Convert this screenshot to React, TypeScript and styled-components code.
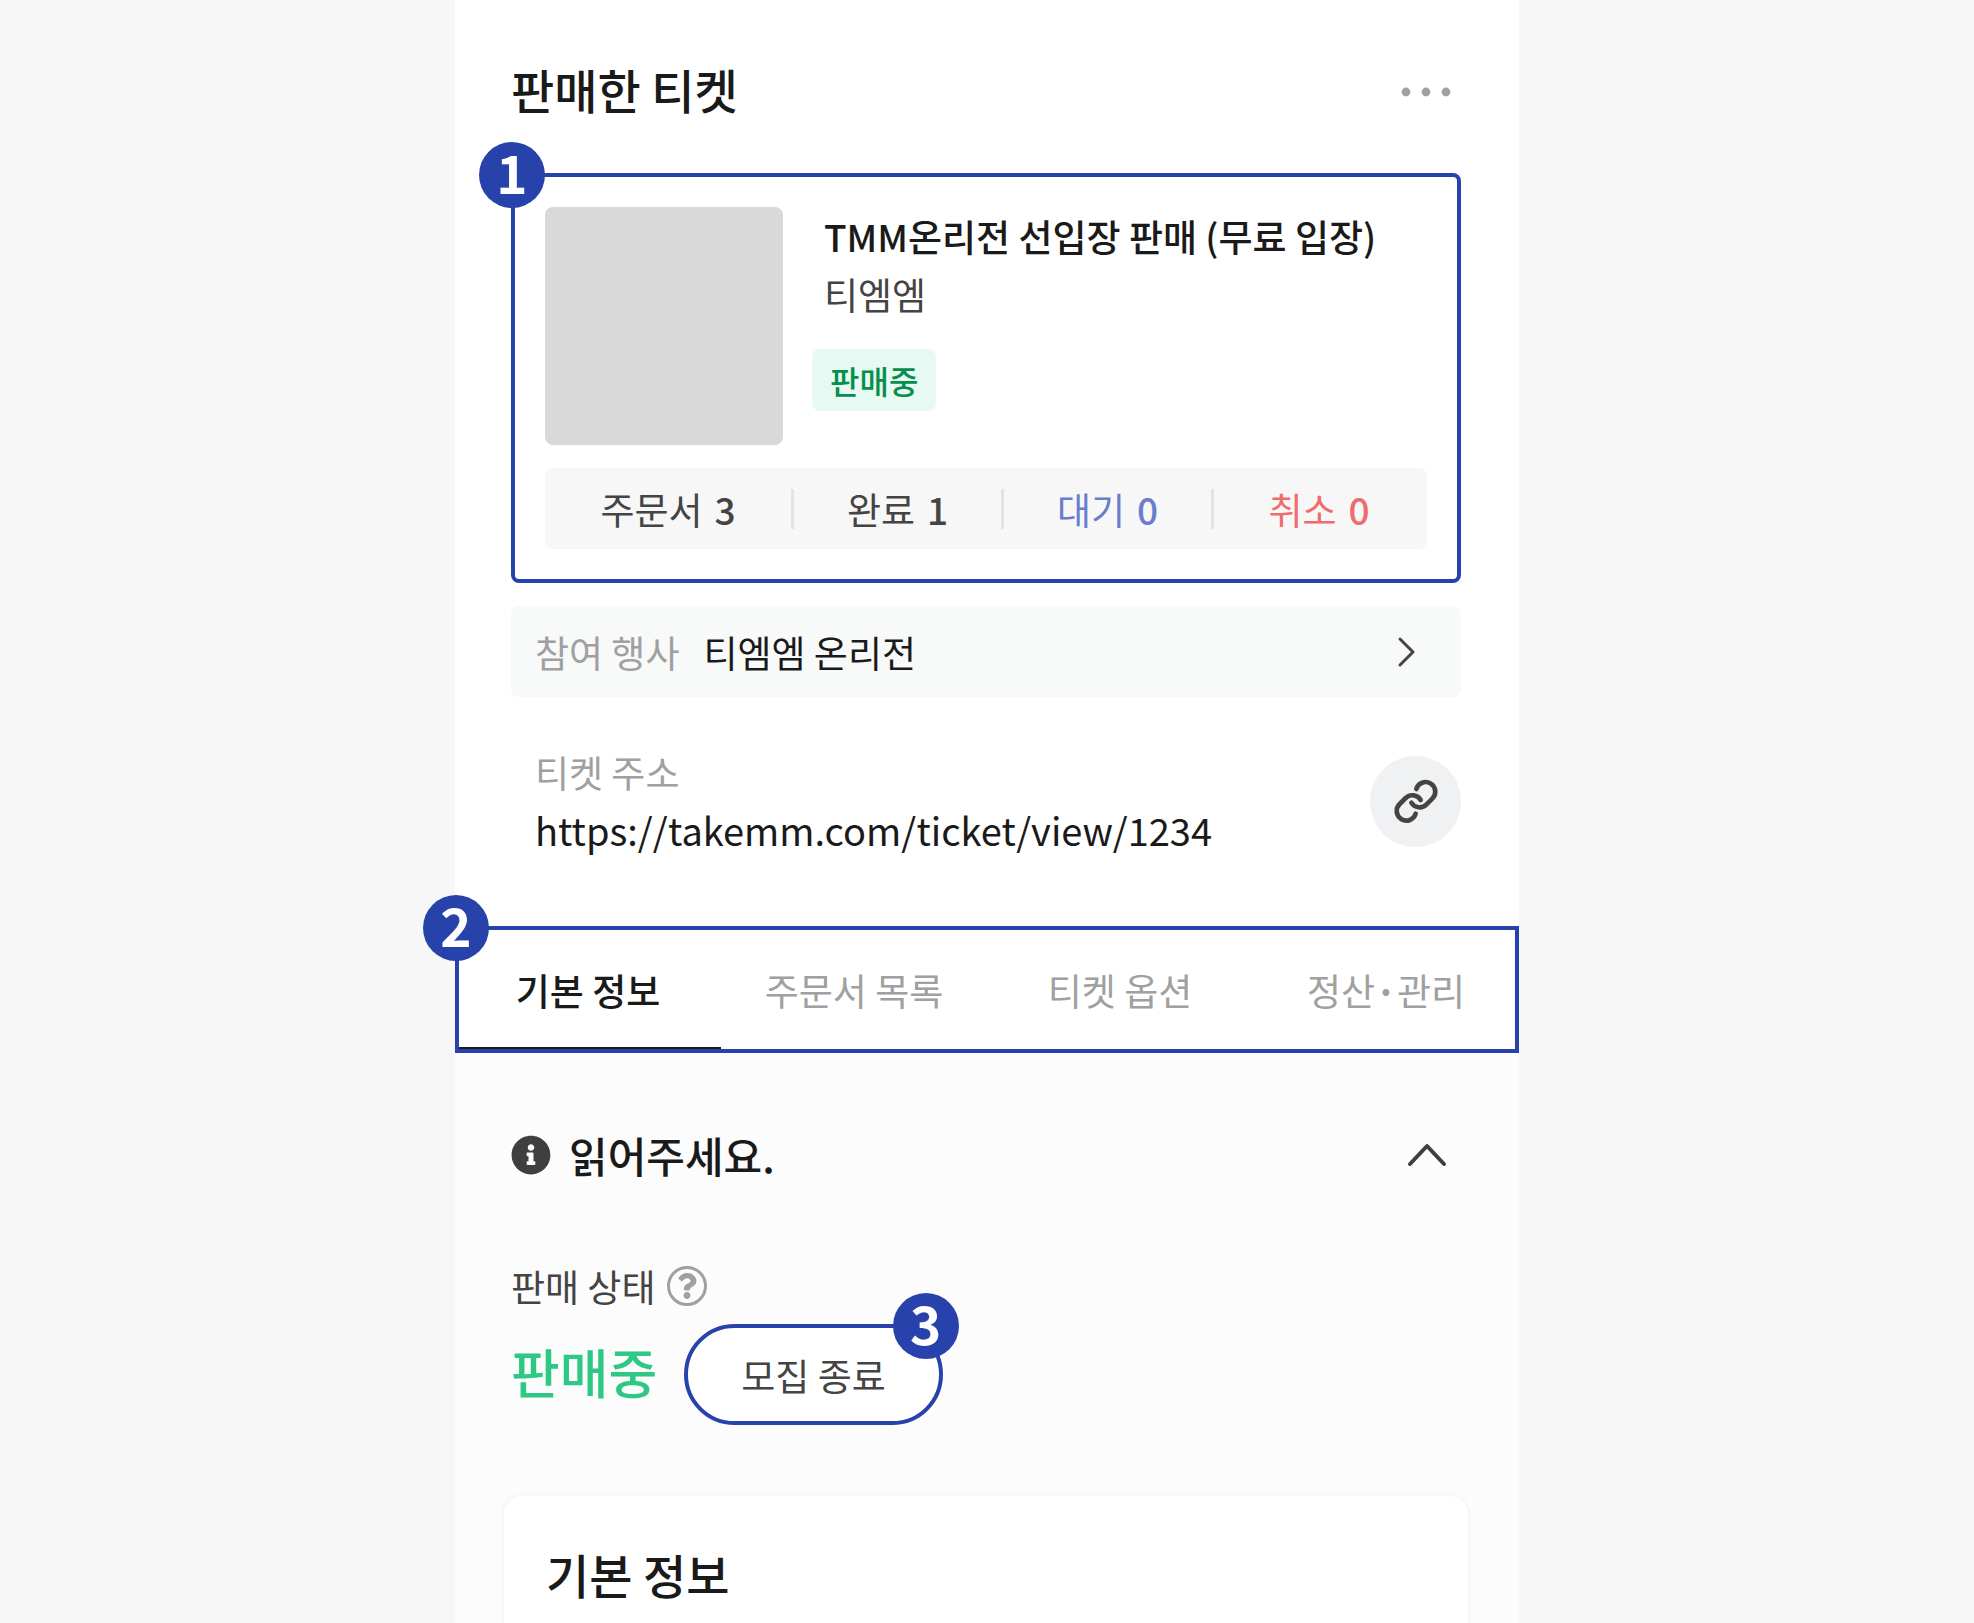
import React from 'react';
import styled, { createGlobalStyle } from 'styled-components';
import { FaInfoCircle, FaQuestion } from 'react-icons/fa';

const blue = '#2842ab';
const ink = '#1a1a1a';
const body = '#444444';
const muted = '#a0a0a0';

const GlobalStyle = createGlobalStyle`
  *, *::before, *::after { box-sizing: border-box; }
  body { margin: 0; background: #f7f7f7; }
  h1, h2, p, dl, dt, dd { margin: 0; font-size: inherit; font-weight: inherit; }
  body, button {
    font-family: "Noto Sans CJK KR", "Noto Sans", sans-serif;
    font-size: 37px;
    line-height: 58px;
    color: ${ink};
  }
  button { margin: 0; padding: 0; border: 0; background: none; cursor: pointer; }
  a { color: inherit; text-decoration: none; }
  svg { display: block; }
`;

const Panel = styled.main`
  display: flex;
  flex-direction: column;
  width: 100%;
  max-width: 1064px;
  min-height: 100vh;
  margin: 0 auto;
  background: #fff;
`;

const Top = styled.div`
  padding: 56px 58px 67px 56px;
`;

const Header = styled.header`
  display: flex;
  align-items: center;
  justify-content: space-between;
  margin-bottom: 45px;
`;

const Heading = styled.h1`
  padding-bottom: 6px;
  font-size: 47px;
  line-height: 66px;
  font-weight: 500;
`;

const MoreButton = styled.button`
  padding: 0 10px;
`;

const Badge = styled.span<{ $side?: 'left' | 'right' }>`
  position: absolute;
  top: -31px;
  ${(p) => (p.$side === 'right' ? 'right: -16px;' : 'left: -32px;')}
  z-index: 2;
  display: flex;
  align-items: center;
  justify-content: center;
  width: 66px;
  height: 66px;
  padding-bottom: 8px;
  border-radius: 50%;
  background: ${blue};
  color: #fff;
  font-size: 53px;
  line-height: 58px;
  font-weight: 700;
`;

const Marked = styled.div`
  position: relative;
`;

const Ticket = styled.section`
  padding: 30px;
  border: 4px solid ${blue};
  border-radius: 8px;
`;

const TicketTop = styled.div`
  display: flex;
  gap: 29px;
  margin-bottom: 23px;
`;

const Thumb = styled.div`
  flex: none;
  width: 238px;
  height: 238px;
  border-radius: 8px;
  background: #d9d9d9;
`;

const Info = styled.div`
  display: flex;
  flex-direction: column;
  align-items: flex-start;
`;

const TicketName = styled.h2`
  padding-left: 12px;
  font-weight: 500;
`;

const Seller = styled.p`
  padding-left: 12px;
  color: ${body};
`;

const Tag = styled.span`
  margin-top: 26px;
  padding: 0 18px;
  border-radius: 8px;
  background: #e6f9f3;
  color: #068f4b;
  font-size: 32px;
  line-height: 62px;
  font-weight: 500;
`;

const Stats = styled.dl`
  display: grid;
  grid-template-columns: 249fr 210fr 210fr 213fr;
  align-items: center;
  height: 81px;
  border-radius: 8px;
  background: #f7f7f7;
`;

const Stat = styled.div<{ $color?: string }>`
  display: flex;
  align-items: center;
  justify-content: center;
  gap: 12px;
  height: 40px;
  border-right: 3px solid #e3e3e3;
  color: ${(p) => p.$color ?? body};

  &:last-child { border-color: transparent; }
  dd { font-weight: 500; }
`;

const EventLink = styled.a`
  display: flex;
  align-items: center;
  gap: 24px;
  height: 91px;
  margin-top: 23px;
  padding: 0 44px 0 24px;
  border-radius: 8px;
  background: #f8f9f9;

  svg { margin-left: auto; }
`;

const Muted = styled.span`
  color: ${muted};
`;

const Address = styled.div`
  display: flex;
  align-items: center;
  justify-content: space-between;
  margin-top: 46px;
  padding-left: 24px;
`;

const Url = styled.p`
  font-size: 38px;
`;

const CopyButton = styled.button`
  display: flex;
  align-items: center;
  justify-content: center;
  width: 91px;
  height: 91px;
  border-radius: 50%;
  background: #f0f1f3;
`;

const Tabs = styled.nav`
  display: grid;
  grid-template-columns: repeat(4, 1fr);
  height: 127px;

  &::after {
    content: '';
    position: absolute;
    inset: 0;
    border: 4px solid ${blue};
    pointer-events: none;
  }
`;

const Tab = styled.button<{ $active?: boolean }>`
  border-bottom: 6px solid ${(p) => (p.$active ? ink : 'transparent')};
  border-top: 6px solid transparent;
  color: ${(p) => (p.$active ? ink : muted)};
  font-weight: ${(p) => (p.$active ? 500 : 400)};
`;

const Content = styled.div`
  display: flex;
  flex: 1;
  flex-direction: column;
  padding: 72px 48px 0 46px;
  background: #fcfcfc;
`;

const Notice = styled.button`
  display: flex;
  align-items: center;
  gap: 18px;
  margin: 0 10px 72px;
  font-size: 42px;
  line-height: 60px;
  font-weight: 500;

  svg:last-child { margin: 0 14px 0 auto; }
`;

const StatusLabel = styled.div`
  display: flex;
  align-items: center;
  gap: 12px;
  margin: 0 10px 9px;
  color: ${body};
`;

const Help = styled.button`
  display: flex;
  align-items: center;
  justify-content: center;
  width: 40px;
  height: 40px;
  border: 3px solid ${muted};
  border-radius: 50%;
  color: ${muted};
`;

const StatusRow = styled.div`
  display: flex;
  align-items: center;
  gap: 27px;
  margin: 0 10px 68px;
`;

const Status = styled.strong`
  padding-bottom: 8px;
  color: #2dc984;
  font-size: 53px;
  line-height: 66px;
  font-weight: 500;
`;

const EndButton = styled.button`
  display: block;
  height: 101px;
  padding: 0 53px;
  border: 4px solid ${blue};
  border-radius: 51px;
  background: #fff;
  color: ${body};
`;

const Card = styled.section`
  flex: 1;
  padding: 45px 42px 0;
  border: 3px solid #f7f8f8;
  border-bottom: 0;
  border-radius: 22px 22px 0 0;
  background: #fff;
`;

const tabs = [
  { id: 'info', label: '기본 정보' },
  { id: 'orders', label: '주문서 목록' },
  { id: 'options', label: '티켓 옵션' },
  { id: 'manage', label: <>정산<b>·</b>관리</> },
];

const stats = [
  { label: '주문서', value: 3 },
  { label: '완료', value: 1 },
  { label: '대기', value: 0, color: '#6a7dcb' },
  { label: '취소', value: 0, color: '#f06b6b' },
];

export default function App() {
  return (
    <>
      <GlobalStyle />
      <Panel>
        <Top>
          <Header>
            <Heading>판매한 티켓</Heading>
            <MoreButton aria-label="더보기">
              <svg width="50" height="10" viewBox="0 0 50 10" fill={muted}>
                <circle cx="5" cy="5" r="4.4" />
                <circle cx="25" cy="5" r="4.4" />
                <circle cx="45" cy="5" r="4.4" />
              </svg>
            </MoreButton>
          </Header>

          <Marked>
            <Badge>1</Badge>
            <Ticket>
              <TicketTop>
                <Thumb />
                <Info>
                  <TicketName>TMM온리전 선입장 판매 (무료 입장)</TicketName>
                  <Seller>티엠엠</Seller>
                  <Tag>판매중</Tag>
                </Info>
              </TicketTop>
              <Stats>
                {stats.map((s) => (
                  <Stat key={s.label} $color={s.color}>
                    <dt>{s.label}</dt>
                    <dd>{s.value}</dd>
                  </Stat>
                ))}
              </Stats>
            </Ticket>
          </Marked>

          <EventLink href="#event">
            <Muted>참여 행사</Muted>
            <span>티엠엠 온리전</span>
            <svg width="20" height="32" viewBox="0 0 20 32" fill="none" stroke={body} strokeWidth="3" strokeLinecap="round" strokeLinejoin="round">
              <path d="M3 3l13 13L3 29" />
            </svg>
          </EventLink>

          <Address>
            <div>
              <Muted as="p">티켓 주소</Muted>
              <Url>https://takemm.com/ticket/view/1234</Url>
            </div>
            <CopyButton aria-label="주소 복사">
              <svg width="48" height="48" viewBox="0 0 144 144" fill="none" stroke={body} strokeWidth="14" strokeLinecap="round" strokeLinejoin="round">
                <path d="M73 36A29 29 0 1 1 121 65L103 83A29 29 0 0 1 58 77" />
                <path d="M71 110A29 29 0 1 1 23 81L41 63A29 29 0 0 1 86 69" />
              </svg>
            </CopyButton>
          </Address>
        </Top>

        <Marked>
          <Badge>2</Badge>
          <Tabs>
            {tabs.map((t, i) => (
              <Tab key={t.id} $active={i === 0}>{t.label}</Tab>
            ))}
          </Tabs>
        </Marked>

        <Content>
          <Notice aria-expanded="true">
            <FaInfoCircle size={40} color="#3f3f3f" />
            읽어주세요.
            <svg width="40" height="24" viewBox="0 0 40 24" fill="none" stroke="#3f3f3f" strokeWidth="4" strokeLinecap="round" strokeLinejoin="round">
              <path d="M3 21L20 3l17 18" />
            </svg>
          </Notice>

          <StatusLabel>
            판매 상태
            <Help aria-label="도움말">
              <FaQuestion size={26} />
            </Help>
          </StatusLabel>
          <StatusRow>
            <Status>판매중</Status>
            <Marked>
              <EndButton>모집 종료</EndButton>
              <Badge $side="right">3</Badge>
            </Marked>
          </StatusRow>

          <Card>
            <Heading as="h2">기본 정보</Heading>
          </Card>
        </Content>
      </Panel>
    </>
  );
}
